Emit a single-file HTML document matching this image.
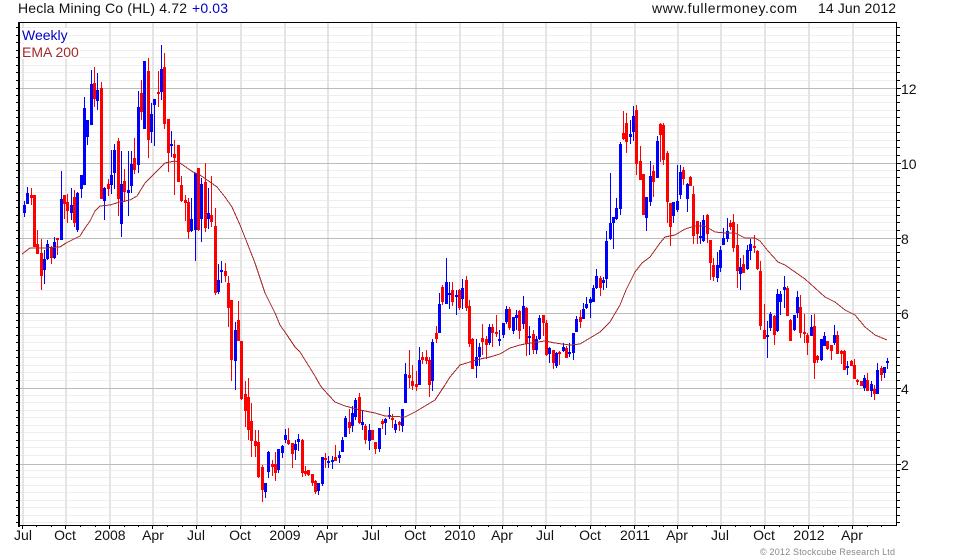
<!DOCTYPE html>
<html><head><meta charset="utf-8"><style>
html,body{margin:0;padding:0;background:#fff}
svg{display:block}
text{font-family:"Liberation Sans",Arial,sans-serif;font-size:14px;fill:#111}
.c{shape-rendering:crispEdges;fill:none}
</style></head><body>
<svg width="980" height="560" viewBox="0 0 980 560" xmlns="http://www.w3.org/2000/svg">
<rect width="980" height="560" fill="#fff"/>
<defs><path id="m" d="M16 28.5H900M16 36.5H900M16 43.5H900M16 51.5H900M16 58.5H900M16 66.5H900M16 73.5H900M16 81.5H900M16 96.5H900M16 103.5H900M16 111.5H900M16 118.5H900M16 126.5H900M16 133.5H900M16 141.5H900M16 148.5H900M16 156.5H900M16 171.5H900M16 178.5H900M16 186.5H900M16 193.5H900M16 201.5H900M16 208.5H900M16 216.5H900M16 223.5H900M16 231.5H900M16 246.5H900M16 253.5H900M16 261.5H900M16 268.5H900M16 276.5H900M16 283.5H900M16 291.5H900M16 298.5H900M16 306.5H900M16 321.5H900M16 328.5H900M16 336.5H900M16 343.5H900M16 351.5H900M16 358.5H900M16 366.5H900M16 373.5H900M16 381.5H900M16 396.5H900M16 403.5H900M16 411.5H900M16 418.5H900M16 426.5H900M16 433.5H900M16 441.5H900M16 448.5H900M16 456.5H900M16 471.5H900M16 478.5H900M16 486.5H900M16 493.5H900M16 501.5H900M16 508.5H900M16 516.5H900M16 523.5H900"/>
<path id="j" d="M16 88.5H901M16 163.5H901M16 238.5H901M16 313.5H901M16 388.5H901M16 464.5H901"/>
<clipPath id="p"><rect x="20" y="23" width="876" height="502"/></clipPath></defs>
<use href="#m" class="c" stroke="#000" transform="translate(0,-1)"/>
<use href="#j" class="c" stroke="#000"/>
<rect x="20" y="23" width="876" height="502" fill="#fff"/>
<g clip-path="url(#p)">
<use href="#m" class="c" stroke="#eee" stroke-width="1" transform="translate(0,-1)"/>
<path class="c" stroke="#e4e4e4" stroke-width="2" d="M23 23V525M66 23V525M110 23V525M153 23V525M197 23V525M241 23V525M285 23V525M328 23V525M372 23V525M416 23V525M460 23V525M503 23V525M546 23V525M591 23V525M635 23V525M678 23V525M721 23V525M765 23V525M809 23V525M853 23V525"/>
<use href="#j" class="c" stroke="#bbb"/>
</g>
<path class="c" stroke="#00f" d="M24.5 201V217M27.5 187V204M44.5 250V284M47.5 240V260M54.5 237V259M61.5 171V240M71.5 188V220M77.5 192V232M81.5 175V198M84.5 97V185M87.5 120V145M91.5 70V125M97.5 73V110M104.5 187V220M111.5 150V194M114.5 144V189M121.5 151V237M128.5 151V216M131.5 151V193M138.5 91V173M144.5 61V129M151.5 103V143M154.5 99V146M161.5 45V100M171.5 131V157M191.5 198V232M195.5 173V261M201.5 178V242M208.5 188V229M218.5 264V294M221.5 261V283M235.5 322V390M265.5 483V498M268.5 451V478M278.5 449V473M282.5 445V458M285.5 429V443M295.5 440V460M298.5 434V451M318.5 483V495M322.5 457V486M328.5 456V468M332.5 456V469M339.5 451V463M342.5 437V452M345.5 416V437M352.5 406V432M355.5 398V420M362.5 410V430M369.5 424V450M379.5 428V452M385.5 418V435M389.5 407V419M395.5 420V433M402.5 409V432M405.5 363V403M419.5 347V385M432.5 339V391M439.5 293V333M446.5 258V304M449.5 282V309M456.5 290V315M462.5 279V309M476.5 339V378M479.5 343V366M489.5 324V345M499.5 330V346M503.5 323V338M506.5 306V324M513.5 317V334M516.5 310V330M523.5 296V329M529.5 326V355M536.5 336V354M539.5 315V340M549.5 347V363M556.5 352V368M563.5 343V352M569.5 343V357M573.5 333V360M576.5 316V332M583.5 303V319M586.5 297V309M590.5 297V318M593.5 285V302M596.5 269V289M603.5 277V290M606.5 231V288M610.5 173V240M613.5 217V249M616.5 198V220M620.5 142V215M630.5 120V144M633.5 106V141M646.5 197V231M650.5 161V206M657.5 136V178M673.5 202V223M677.5 165V212M680.5 165V199M687.5 183V212M700.5 222V244M703.5 215V242M717.5 252V282M720.5 246V272M723.5 228V245M727.5 218V242M740.5 258V290M747.5 245V270M750.5 239V260M767.5 321V358M770.5 312V331M777.5 289V332M780.5 291V315M784.5 276V308M794.5 315V331M797.5 291V318M811.5 315V336M821.5 339V361M824.5 332V346M834.5 325V345M847.5 361V375M864.5 375V391M871.5 381V397M877.5 363V394M884.5 367V378M887.5 358V369"/>
<path class="c" stroke="#00f" stroke-width="3" d="M24.5 205V213M27.5 193V204M44.5 259V270M47.5 244V259M54.5 242V258M61.5 199V240M71.5 205V213M77.5 193V230M81.5 175V189M84.5 108V185M87.5 120V137M91.5 84V125M97.5 90V101M104.5 188V201M111.5 175V185M114.5 150V173M121.5 184V224M128.5 190V193M131.5 164V186M138.5 107V165M144.5 61V129M151.5 114V132M154.5 99V105M161.5 69V92M171.5 144V146M191.5 219V231M195.5 173V230M201.5 184V219M208.5 213V219M218.5 280V292M221.5 270V272M235.5 330V361M265.5 483V492M268.5 452V472M278.5 449V470M282.5 446V453M285.5 435V440M295.5 444V450M298.5 439V442M318.5 483V491M322.5 457V484M328.5 461V463M332.5 460V462M339.5 455V458M342.5 440V452M345.5 418V437M352.5 413V426M355.5 400V417M362.5 422V425M369.5 430V441M379.5 428V449M385.5 419V423M389.5 415V417M395.5 424V430M402.5 409V426M405.5 374V403M419.5 360V385M432.5 342V381M439.5 304V333M446.5 282V304M449.5 293V295M456.5 295V297M462.5 288V299M476.5 357V366M479.5 347V357M489.5 327V343M499.5 339V341M503.5 323V335M506.5 309V322M513.5 317V331M516.5 315V318M523.5 306V324M529.5 336V338M536.5 339V350M539.5 318V339M549.5 348V354M556.5 353V366M563.5 347V351M569.5 352V354M573.5 333V353M576.5 319V332M583.5 309V319M586.5 304V308M590.5 299V303M593.5 288V302M596.5 276V288M603.5 280V283M606.5 241V279M610.5 223V239M613.5 217V223M616.5 208V219M620.5 144V209M630.5 134V137M633.5 116V132M646.5 197V218M650.5 176V202M657.5 141V178M673.5 202V216M677.5 201V210M680.5 172V195M687.5 184V199M700.5 236V238M703.5 220V241M717.5 265V278M720.5 250V268M723.5 238V245M727.5 231V239M740.5 267V274M747.5 250V269M750.5 244V251M767.5 335V337M770.5 314V328M777.5 294V331M780.5 294V302M784.5 287V290M794.5 315V330M797.5 297V313M811.5 327V336M821.5 339V360M824.5 336V346M834.5 335V343M847.5 366V368M864.5 378V388M871.5 384V391M877.5 370V394M884.5 367V373M887.5 361V363"/>
<path class="c" stroke="#f00" d="M31.5 188V205M34.5 195V247M37.5 230V254M41.5 239V290M51.5 246V264M57.5 238V255M64.5 195V219M67.5 194V223M74.5 190V227M94.5 67V107M101.5 82V199M108.5 179V196M118.5 138V216M124.5 169V202M134.5 138V174M141.5 80V120M148.5 58V158M158.5 71V107M164.5 53V129M168.5 119V172M174.5 140V195M178.5 145V182M181.5 176V202M185.5 195V221M188.5 198V239M198.5 168V231M205.5 163V232M211.5 176V227M215.5 208V295M225.5 263V282M228.5 276V327M231.5 300V381M238.5 301V341M241.5 341V400M245.5 381V427M248.5 378V440M251.5 403V457M255.5 430V457M258.5 430V478M262.5 465V502M272.5 460V476M275.5 452V481M288.5 428V445M292.5 443V468M302.5 439V477M305.5 466V476M308.5 470V476M312.5 474V486M315.5 480V494M325.5 453V468M335.5 445V461M349.5 409V434M359.5 393V424M365.5 424V444M372.5 430V440M375.5 442V454M382.5 419V429M392.5 414V428M399.5 421V431M409.5 350V388M412.5 365V390M416.5 371V391M422.5 352V364M426.5 350V364M429.5 357V397M436.5 326V343M442.5 285V305M452.5 282V306M459.5 289V310M466.5 276V311M469.5 300V347M472.5 338V369M482.5 324V355M486.5 336V359M492.5 324V347M496.5 315V337M509.5 307V330M519.5 310V339M526.5 307V356M533.5 330V354M543.5 315V336M546.5 320V356M553.5 350V369M559.5 351V365M566.5 346V358M580.5 310V328M600.5 276V296M623.5 111V140M626.5 113V153M636.5 105V175M640.5 146V180M643.5 174V215M653.5 165V197M660.5 123V162M663.5 123V165M667.5 151V223M670.5 203V246M683.5 167V185M690.5 176V186M693.5 186V244M697.5 221V244M707.5 214V243M710.5 240V280M713.5 258V281M730.5 220V230M733.5 214V252M737.5 224V288M743.5 255V272M754.5 235V253M757.5 250V270M760.5 261V330M764.5 304V339M774.5 315V345M787.5 286V316M790.5 319V341M800.5 295V338M804.5 314V343M807.5 333V355M814.5 314V379M817.5 355V363M827.5 341V350M831.5 345V360M837.5 331V354M841.5 350V364M844.5 350V370M851.5 360V366M854.5 359V379M857.5 379V385M861.5 381V386M867.5 373V391M874.5 385V400M881.5 366V381"/>
<path class="c" stroke="#f00" stroke-width="3" d="M31.5 195V198M34.5 195V247M37.5 244V254M41.5 253V276M51.5 248V258M57.5 238V240M64.5 195V204M67.5 202V211M74.5 197V223M94.5 83V99M101.5 88V199M108.5 184V189M118.5 141V199M124.5 181V192M134.5 158V170M141.5 93V112M148.5 71V140M158.5 92V94M164.5 67V124M168.5 119V153M174.5 154V158M178.5 145V182M181.5 185V201M185.5 200V203M188.5 202V232M198.5 168V230M205.5 182V228M211.5 215V222M215.5 226V293M225.5 271V276M228.5 283V308M231.5 300V360M238.5 320V341M241.5 341V399M245.5 394V411M248.5 397V430M251.5 421V441M255.5 441V446M258.5 442V477M262.5 467V490M272.5 464V467M275.5 464V473M288.5 440V444M292.5 443V454M302.5 440V473M305.5 471V474M308.5 470V475M312.5 474V483M315.5 481V492M325.5 458V460M335.5 457V461M349.5 422V428M359.5 397V423M365.5 426V440M372.5 430V440M375.5 442V449M382.5 421V424M392.5 418V420M399.5 422V425M409.5 375V378M412.5 381V386M416.5 384V387M422.5 357V360M426.5 357V361M429.5 360V385M436.5 333V339M442.5 287V302M452.5 290V302M459.5 290V308M466.5 280V308M469.5 306V344M472.5 339V369M482.5 338V342M486.5 339V345M492.5 327V333M496.5 332V334M509.5 309V328M519.5 311V331M526.5 308V344M533.5 334V350M543.5 315V323M546.5 323V355M553.5 350V363M559.5 352V354M566.5 348V358M580.5 317V322M600.5 278V288M623.5 133V139M626.5 123V142M636.5 110V164M640.5 161V180M643.5 174V215M653.5 171V182M660.5 124V135M663.5 125V160M667.5 153V202M670.5 203V227M683.5 170V179M690.5 177V186M693.5 194V236M697.5 221V234M707.5 215V234M710.5 240V263M713.5 265V277M730.5 223V227M733.5 222V248M737.5 245V271M743.5 264V273M754.5 246V248M757.5 251V269M760.5 271V326M764.5 330V339M774.5 316V335M787.5 288V316M790.5 320V341M800.5 307V333M804.5 332V334M807.5 335V343M814.5 326V363M817.5 356V360M827.5 341V349M831.5 345V351M837.5 335V354M841.5 351V354M844.5 351V370M851.5 361V366M854.5 365V379M857.5 380V382M861.5 381V386M867.5 380V391M874.5 389V394M881.5 368V375"/>
<path fill="none" shape-rendering="crispEdges" stroke="#a52a2a" stroke-width="1" d="M22 254L30 248L45 248L60 247L66 243L80 236L85 228L90 221L95 211L100 206L110 205L120 202L130 200L137 196L145 183L155 173L165 163L175 161L180 163L193 172L200 175L210 182L217 187L225 197L232 207L240 225L246 240L255 263L265 293L275 313L280 325L287 335L295 347L300 352L310 368L315 376L320 385L323 389L335 402L345 406L360 410L375 413L385 416L405 417L415 412L430 403L435 400L445 385L450 377L460 365L470 362L480 359L490 357L500 354L510 348L520 345L530 343L545 341L555 343L570 345L580 344L590 338L600 332L610 322L620 305L626 290L635 272L642 263L650 257L660 243L665 237L675 235L685 229L695 226L705 226L715 232L725 233L735 233L745 238L755 238L760 241L768 251L778 262L785 265L795 272L805 279L815 288L825 297L835 302L845 310L855 315L865 327L875 335L887 340"/>
<rect x="21" y="28" width="48" height="15" fill="#fff"/>
<rect x="21" y="44" width="59" height="15" fill="#fff"/>
<text x="22" y="40" style="fill:#0000c8">Weekly</text>
<text x="22" y="57" style="fill:#a52a2a">EMA 200</text>
<path class="c" stroke="#000" d="M18 22.5H897M896.5 22V526M18 525.5H897M22.5 526V529M65.5 526V529M109.5 526V529M152.5 526V529M196.5 526V529M240.5 526V529M284.5 526V529M327.5 526V529M371.5 526V529M415.5 526V529M459.5 526V529M502.5 526V529M545.5 526V529M590.5 526V529M634.5 526V529M677.5 526V529M720.5 526V529M764.5 526V529M808.5 526V529M852.5 526V529M36.5 526V527M51.5 526V527M80.5 526V527M95.5 526V527M124.5 526V527M138.5 526V527M167.5 526V527M182.5 526V527M211.5 526V527M225.5 526V527M255.5 526V527M270.5 526V527M298.5 526V527M313.5 526V527M342.5 526V527M357.5 526V527M386.5 526V527M400.5 526V527M430.5 526V527M444.5 526V527M473.5 526V527M488.5 526V527M517.5 526V527M531.5 526V527M560.5 526V527M575.5 526V527M605.5 526V527M620.5 526V527M648.5 526V527M663.5 526V527M692.5 526V527M706.5 526V527M735.5 526V527M750.5 526V527M779.5 526V527M793.5 526V527M823.5 526V527M838.5 526V527M867.5 526V527M881.5 526V527"/>
<path class="c" stroke="#000" stroke-width="2" d="M19 22V527"/>
<text x="18" y="13" textLength="169" lengthAdjust="spacing">Hecla Mining Co (HL) 4.72</text>
<text x="192" y="13" textLength="36" lengthAdjust="spacing" style="fill:#0000c8">+0.03</text>
<text x="652" y="13" textLength="145" lengthAdjust="spacing">www.fullermoney.com</text>
<text x="818" y="13" textLength="78" lengthAdjust="spacing">14 Jun 2012</text>
<g text-anchor="middle">
<text x="23" y="540">Jul</text><text x="65" y="540">Oct</text><text x="110" y="540">2008</text><text x="153" y="540">Apr</text><text x="196" y="540">Jul</text><text x="240" y="540">Oct</text><text x="285" y="540">2009</text><text x="327" y="540">Apr</text><text x="371" y="540">Jul</text><text x="415" y="540">Oct</text><text x="460" y="540">2010</text><text x="502" y="540">Apr</text><text x="545" y="540">Jul</text><text x="590" y="540">Oct</text><text x="635" y="540">2011</text><text x="677" y="540">Apr</text><text x="720" y="540">Jul</text><text x="764" y="540">Oct</text><text x="809" y="540">2012</text><text x="852" y="540">Apr</text>
</g>
<text x="901" y="94">12</text><text x="901" y="169">10</text><text x="901" y="244">8</text><text x="901" y="319">6</text><text x="901" y="394">4</text><text x="901" y="470">2</text>
<text x="760" y="555" textLength="135" lengthAdjust="spacing" style="font-size:9px;fill:#888">© 2012 Stockcube Research Ltd</text>
</svg>
</body></html>
